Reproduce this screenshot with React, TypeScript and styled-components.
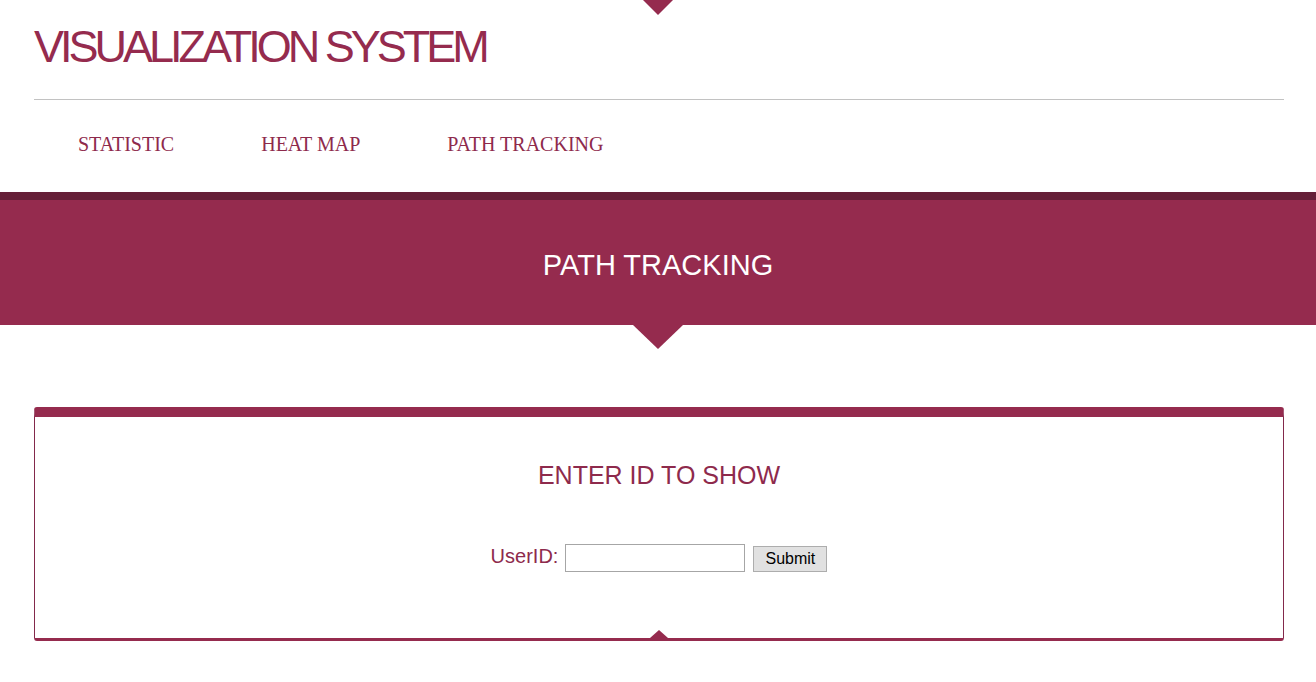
import * as React from "react";
import styled, { createGlobalStyle } from "styled-components";

const maroon = "#952b4e";
const maroonDark = "#661f38";
const maroonText = "#8e2a4c";

const GlobalStyle = createGlobalStyle`
  html, body {
    margin: 0;
    padding: 0;
    background: #ffffff;
  }
  body {
    font-family: "Liberation Sans", Arial, sans-serif;
  }
`;

const PageStyled = styled.div`
  display: flex;
  flex-direction: column;
  min-height: 682px;
  background: #ffffff;
`;

const HeaderStyled = styled.header`
  position: relative;
  display: flex;
  flex-direction: column;
  padding: 0 32px 0 34px;

  &::before {
    content: "";
    position: absolute;
    top: 0;
    left: 50%;
    margin-left: -15px;
    border-left: 15px solid transparent;
    border-right: 15px solid transparent;
    border-top: 15px solid ${maroon};
  }
`;

const SiteTitle = styled.h1`
  margin: 0;
  padding-top: 24px;
  font-family: "Liberation Sans", Arial, sans-serif;
  font-weight: normal;
  font-size: 45px;
  line-height: 45px;
  letter-spacing: -4px;
  color: ${maroon};
`;

const Divider = styled.div`
  margin-top: 30px;
  height: 1px;
  background: #c2c2c2;
`;

const NavBar = styled.nav`
  display: flex;
  flex-direction: row;
  padding: 34px 0 38px 0;
`;

const NavItem = styled.a`
  padding: 0 43px 0 44px;
  font-family: "Liberation Serif", "Times New Roman", serif;
  font-size: 20px;
  line-height: 20px;
  color: ${maroonText};
  text-decoration: none;
  text-transform: uppercase;
  cursor: pointer;
`;

const Banner = styled.section`
  position: relative;
  border-top: 8px solid ${maroonDark};
  background: ${maroon};
  padding: 51px 0 45px 0;
  display: flex;
  justify-content: center;

  &::after {
    content: "";
    position: absolute;
    top: 100%;
    left: 50%;
    margin-left: -25px;
    border-left: 25px solid transparent;
    border-right: 25px solid transparent;
    border-top: 24px solid ${maroon};
  }
`;

const BannerTitle = styled.h2`
  margin: 0;
  font-family: "Liberation Sans", Arial, sans-serif;
  font-weight: normal;
  font-size: 29px;
  line-height: 29px;
  color: #ffffff;
`;

const Card = styled.section`
  position: relative;
  margin: 82px 32px 0 34px;
  border-top: 10px solid ${maroon};
  border-left: 1px solid #83294b;
  border-right: 1px solid #83294b;
  border-bottom: 3px solid ${maroon};
  border-radius: 3px;
  padding: 46px 0 66px 0;
  display: flex;
  flex-direction: column;
  align-items: center;

  &::after {
    content: "";
    position: absolute;
    bottom: 0;
    left: 50%;
    margin-left: -9px;
    border-left: 9px solid transparent;
    border-right: 9px solid transparent;
    border-bottom: 8px solid ${maroon};
  }
`;

const CardTitle = styled.h3`
  margin: 0;
  font-family: "Liberation Sans", Arial, sans-serif;
  font-weight: normal;
  font-size: 25px;
  line-height: 25px;
  color: ${maroonText};
`;

const FormRow = styled.form`
  margin-top: 56px;
  display: flex;
  flex-direction: row;
  align-items: center;
`;

const Label = styled.label`
  font-family: "Liberation Sans", Arial, sans-serif;
  font-size: 20px;
  color: ${maroonText};
  margin-right: 7px;
  position: relative;
  top: -2px;
`;

const TextInput = styled.input`
  box-sizing: border-box;
  width: 180px;
  height: 28px;
  border: 1px solid #a6a6a6;
  padding: 2px 4px;
  font-size: 16px;
  outline: none;
`;

const SubmitButton = styled.button`
  box-sizing: border-box;
  margin-left: 8px;
  width: 74px;
  height: 26px;
  background: #e1e1e1;
  border: 1px solid #adadad;
  font-family: "Liberation Sans", Arial, sans-serif;
  font-size: 16px;
  color: #000000;
  padding: 0;
  margin-top: 1px;
`;

const navLinks = ["Statistic", "Heat Map", "Path Tracking"];

export default function App() {
  return (
    <PageStyled>
      <GlobalStyle />
      <HeaderStyled>
        <SiteTitle>VISUALIZATION SYSTEM</SiteTitle>
        <Divider />
        <NavBar>
          {navLinks.map(link => (
            <NavItem key={link}>{link}</NavItem>
          ))}
        </NavBar>
      </HeaderStyled>
      <Banner>
        <BannerTitle>PATH TRACKING</BannerTitle>
      </Banner>
      <Card>
        <CardTitle>ENTER ID TO SHOW</CardTitle>
        <FormRow onSubmit={e => e.preventDefault()}>
          <Label htmlFor="userId">UserID:</Label>
          <TextInput id="userId" type="text" />
          <SubmitButton type="submit">Submit</SubmitButton>
        </FormRow>
      </Card>
    </PageStyled>
  );
}
